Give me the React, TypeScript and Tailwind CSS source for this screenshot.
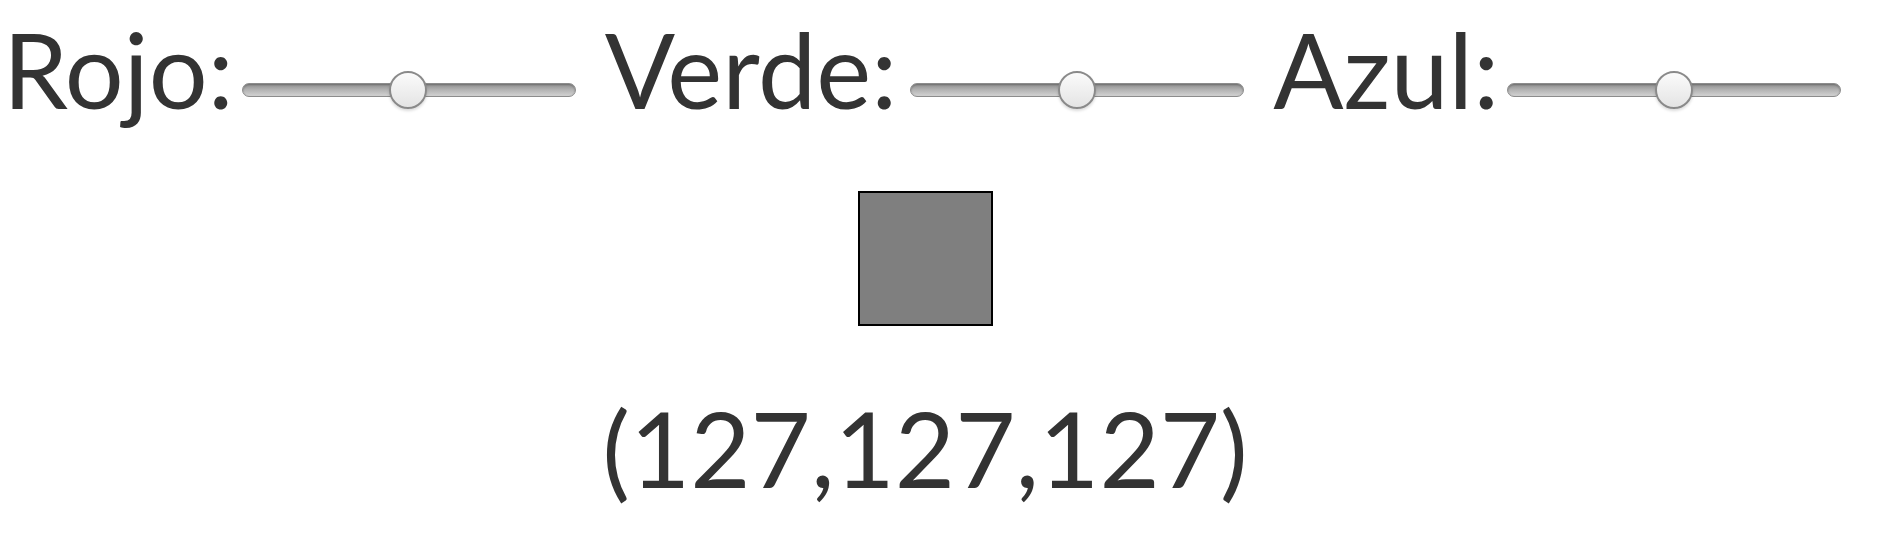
const channels = [
  { label: 'Rojo:', value: 127, lead: '', gap: 'ml-[8px]' },
  { label: 'Verde:', value: 127, lead: 'ml-[29px]', gap: 'ml-[13px]' },
  { label: 'Azul:', value: 127, lead: 'ml-[29px]', gap: 'ml-[8px]' },
]

function Slider({ value, max = 255, className = '' }: { value: number; max?: number; className?: string }) {
  // thumb travels inside the track, like a native range input
  const pct = value / max
  return (
    <div
      role="slider"
      aria-valuenow={value}
      aria-valuemin={0}
      aria-valuemax={max}
      className={`relative mt-[65px] h-[38px] w-[334px] shrink-0 ${className}`}
    >
      <div className="absolute left-0 right-0 top-[12px] h-[14px] rounded-full border border-[#8c8c8c] bg-gradient-to-b from-[#8f8f8f] via-[#b4b4b4] to-[#d2d2d2] shadow-[inset_0_1px_2px_rgba(0,0,0,0.25)]" />
      <div
        className="absolute top-0 h-[38px] w-[38px] rounded-full border-2 border-[#8a8a8a] bg-gradient-to-b from-[#fbfbfb] to-[#e4e4e4] shadow-[0_2px_3px_rgba(0,0,0,0.15)]"
        style={{ left: `calc(${pct} * (100% - 38px))` }}
      />
    </div>
  )
}

export default function App() {
  return (
    <div
      className="min-h-screen bg-white text-[#333]"
      style={{ fontFamily: 'Lato, "Open Sans", sans-serif' }}
    >
      <div className="flex w-[1850px] flex-col items-center pt-[6px]">
        <div className="flex items-start self-start pl-[3px] text-[104px] leading-[125px]">
          {channels.map((c) => (
            <div key={c.label} className={`flex items-start ${c.lead}`}>
              <span className="whitespace-nowrap">{c.label}</span>
              <Slider value={c.value} className={c.gap} />
            </div>
          ))}
        </div>

        <div className="mt-[60px] h-[135px] w-[135px] border-2 border-black bg-[rgb(127,127,127)]" />

        <div className="mt-[59px] text-[104px] leading-[125px]">(127,127,127)</div>
      </div>
    </div>
  )
}
